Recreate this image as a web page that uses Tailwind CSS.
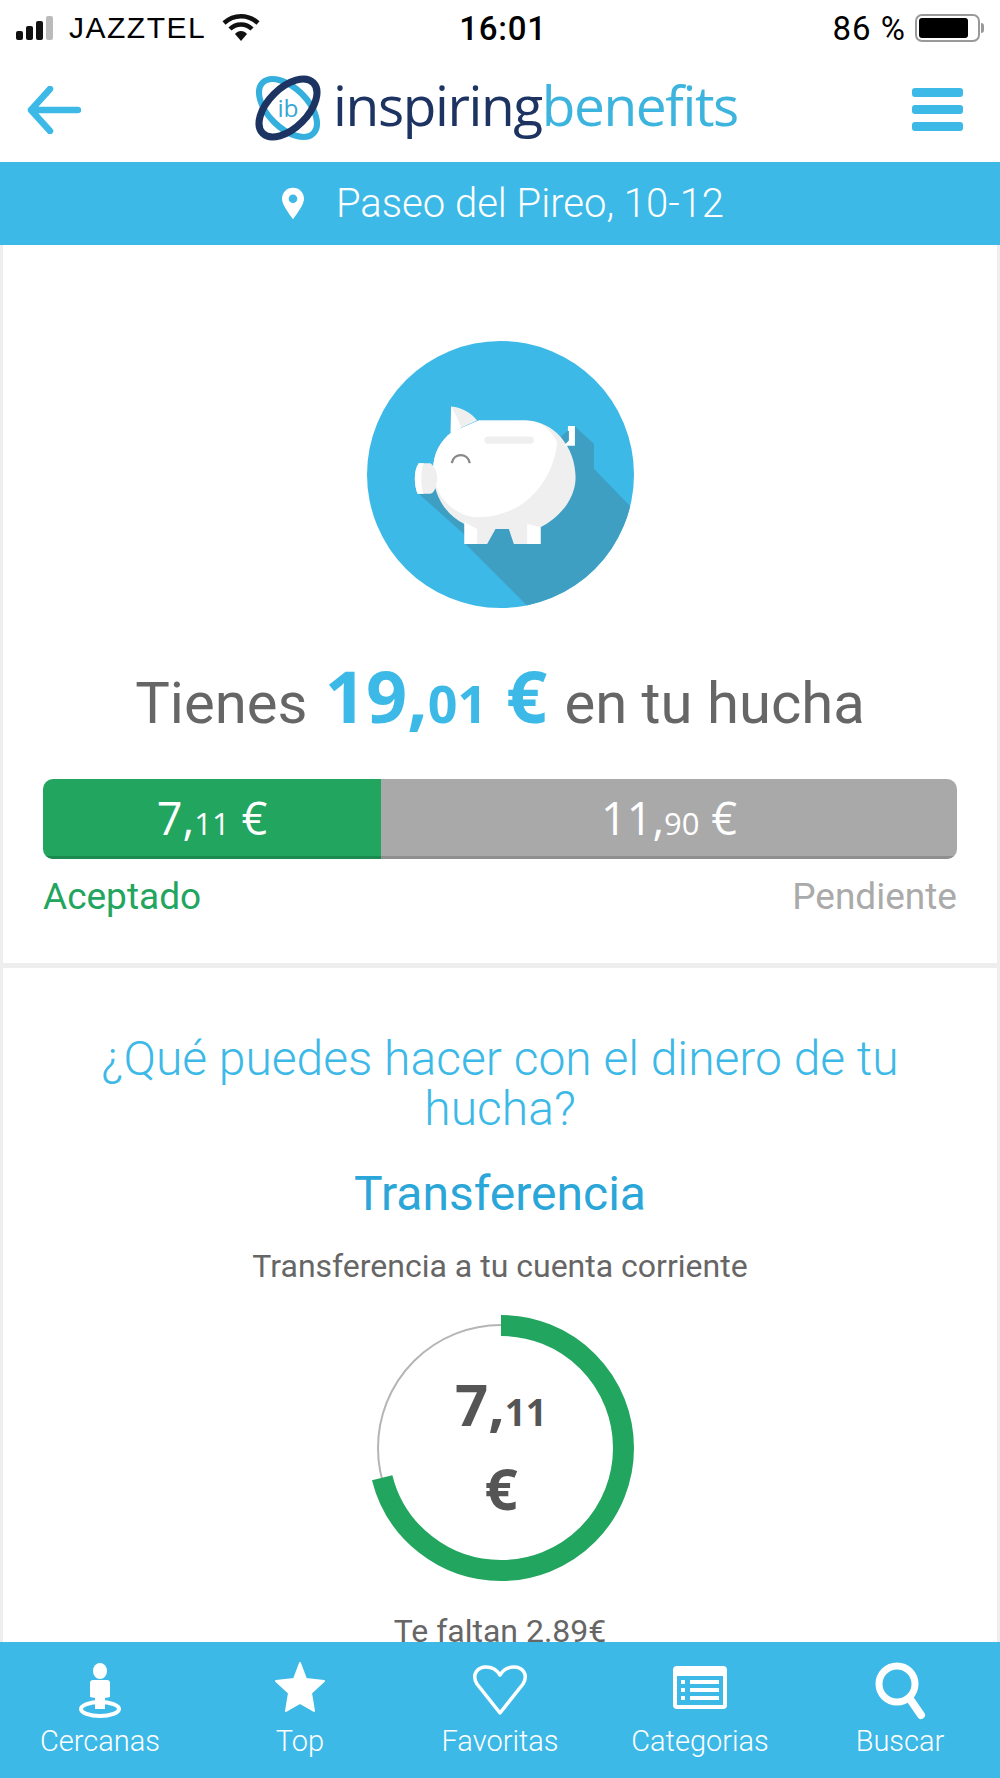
<!DOCTYPE html>
<html lang="es">
<head>
  <meta charset="UTF-8">
  <meta name="viewport" content="width=device-width, initial-scale=1.0">
  <title>Inspiring Benefits - Hucha</title>
  <script src="https://cdn.jsdelivr.net/npm/@tailwindcss/browser@4"></script>
</head>
<body class="bg-white font-['Roboto',sans-serif] text-[#666]">
<div class="relative flex h-[1778px] w-[1000px] flex-col overflow-hidden bg-white">

  <!-- Status bar -->
  <div class="flex h-[50px] shrink-0 items-center justify-between pl-[16px] pr-[16px] pt-[6px] font-['Liberation_Sans',sans-serif] text-black">
    <div class="flex w-[300px] items-center">
      <svg width="38" height="26" viewBox="0 0 38 26">
        <rect x="0" y="16" width="7" height="9" rx="2" fill="#111"/>
        <rect x="10" y="11" width="7" height="14" rx="2" fill="#111"/>
        <rect x="20" y="6" width="7" height="19" rx="2" fill="#111"/>
        <rect x="30" y="1" width="7" height="24" rx="2" fill="#bbb"/>
      </svg>
      <span class="ml-[15px] text-[30px] leading-none tracking-[1.5px]">JAZZTEL</span>
      <svg class="ml-[16px]" width="38" height="28" viewBox="0 0 38 28">
        <path d="M2 9C12 0 26 0 36 9M8 15C14 9 24 9 30 15" fill="none" stroke="#111" stroke-width="4.5"/>
        <path d="M13 20C16 16 22 16 25 20L19 27Z" fill="#111"/>
      </svg>
    </div>
    <div class="ml-[6px] font-['Roboto',sans-serif] text-[33px] font-medium leading-none tracking-[0.8px]">16:01</div>
    <div class="flex w-[300px] items-center justify-end">
      <span class="font-['Roboto',sans-serif] text-[33px] leading-none tracking-[1px]">86 %</span>
      <div class="ml-[9px] flex h-[28px] w-[65px] items-center rounded-[7px] border-2 border-[#999] p-[2px]">
        <div class="h-full w-[86%] rounded-[3px] bg-black"></div>
      </div>
      <div class="ml-[1px] h-[10px] w-[3px] rounded-r-full bg-[#999]"></div>
    </div>
  </div>

  <!-- Header -->
  <header class="relative flex h-[112px] shrink-0 items-center justify-between pl-[27px] pr-[37px]">
    <svg class="mt-[7px]" width="54" height="48" viewBox="0 0 54 48">
      <path d="M51 24H4M23 3L4 24L23 45" fill="none" stroke="#3cb9e7" stroke-width="6.500" stroke-linecap="round" stroke-linejoin="round"/>
    </svg>
    <div class="mt-[4px] flex items-center">
      <svg width="66" height="66" viewBox="0 0 70 70">
        <ellipse cx="35" cy="35" rx="38" ry="21" transform="rotate(45 35 35)" fill="none" stroke="#35b0de" stroke-width="6.500"/>
        <ellipse cx="35" cy="35" rx="38" ry="21" transform="rotate(-45 35 35)" fill="none" stroke="#1d3463" stroke-width="7.500"/>
        <text x="35" y="45" text-anchor="middle" font-family="Open Sans" font-size="26" fill="#35a6d4">ib</text>
      </svg>
      <div class="ml-[12px] pb-[8px] font-['Open_Sans',sans-serif] text-[55px] font-normal leading-none tracking-[-1.4px]">
        <span class="text-[#1d3463]">inspiring</span><span class="text-[#3cb4de]">benefits</span>
      </div>
    </div>
    <div class="mt-[7px] flex w-[51px] flex-col gap-[8px]">
      <div class="h-[9px] rounded-[3px] bg-[#3cb9e7]"></div>
      <div class="h-[9px] rounded-[3px] bg-[#3cb9e7]"></div>
      <div class="h-[9px] rounded-[3px] bg-[#3cb9e7]"></div>
    </div>
  </header>

  <!-- Location bar -->
  <div class="flex h-[83px] shrink-0 items-center justify-center bg-[#3cb9e7] pl-[6px] text-white">
    <svg class="mr-[32px]" width="22" height="33" viewBox="0 0 23 33">
      <path fill-rule="evenodd" d="M11.500 0C5 0 0 5 0 11.500C0 18 8 28 11.500 33C15 28 23 18 23 11.500C23 5 18 0 11.500 0ZM11.500 7A4.500 4.500 0 1 1 11.500 16A4.500 4.500 0 1 1 11.500 7Z" fill="#fff"/>
    </svg>
    <span class="text-[40px] font-light leading-none">Paseo del Pireo, 10-12</span>
  </div>

  <!-- Hucha card -->
  <section class="flex h-[718px] shrink-0 flex-col items-center border-x-[3px] border-[#eee] px-[40px] pt-[96px]">
    <svg width="267" height="267" viewBox="80 62 800 800">
      <defs><clipPath id="disc"><circle cx="480" cy="462" r="400"/></clipPath></defs>
      <circle cx="480" cy="462" r="400" fill="#3cb9e7"/>
      <path clip-path="url(#disc)" d="M235 520L370 640L375 670L620 915L920 610L760 445L760 370L700 315L600 400Z" fill="#3f9fc3"/>
      <path d="M415 300L555 300C640 300 705 380 705 470C705 540 650 595 600 620L600 670L520 670L505 625L465 625L440 670L372 670L372 610C320 585 278 530 278 450C278 400 300 360 335 335Z" fill="#efefef"/>
      <path d="M278 450C278 400 300 360 335 335L415 300L555 300C600 300 630 325 650 365C640 470 560 590 410 590C350 590 278 530 278 450Z" fill="#fff"/>
      <path d="M372 605L410 625L410 670L372 670ZM560 610L600 620L600 670L560 670Z" fill="#fff"/>
      <path d="M330 338L332 258C365 260 395 280 410 300L362 322Z" fill="#efefef"/>
      <path d="M332 258C345 280 355 300 362 322L332 338Z" fill="#fff"/>
      <path d="M235 428L270 428C285 440 292 460 290 480C288 500 280 520 268 520L232 520C222 500 218 450 235 428Z" fill="#efefef"/>
      <path d="M235 428L250 428C240 450 240 500 250 520L232 520C222 500 218 450 235 428Z" fill="#fff"/>
      <rect x="432" y="348" width="148" height="22" rx="11" fill="#efefef"/>
      <path d="M334 428C340 396 382 396 388 428" fill="none" stroke="#888" stroke-width="7"/>
      <path d="M682 317H703V376H670L685 360V332H682Z" fill="#fff"/>
    </svg>

    <h1 class="mt-[50px] h-[90px] whitespace-nowrap text-center text-[58px] leading-[90px] text-[#666]">
      Tienes <span class="mx-[3px] font-['Open_Sans',sans-serif] text-[72px] font-bold leading-none text-[#3cb9e7]">19,<span class="text-[52px]">01</span> €</span> en tu hucha
    </h1>

    <div class="mt-[31px] flex h-[80px] w-full overflow-hidden rounded-[10px] font-['Open_Sans',sans-serif] text-white">
      <div class="flex w-[338px] items-center justify-center border-b-[3px] border-[#1a8a4e] bg-[#22a55f] text-[45px]"><span>7,<span class="text-[31px]">11</span> €</span></div>
      <div class="flex flex-1 items-center justify-center border-b-[3px] border-[#8f8f8f] bg-[#a9a9a9] text-[45px]"><span>11,<span class="text-[31px]">90</span> €</span></div>
    </div>

    <div class="mt-[18px] flex w-full justify-between text-[37px] leading-[40px]">
      <span class="text-[#22a55f]">Aceptado</span>
      <span class="text-[#aaa]">Pendiente</span>
    </div>
  </section>

  <div class="h-[5px] shrink-0 bg-[#eee]"></div>

  <!-- Transferencia card -->
  <section class="flex flex-1 flex-col items-center border-x-[3px] border-[#eee] px-[40px] pt-[66px] text-center">
    <h2 class="text-[48px] font-light leading-[50px] text-[#3cb9e7]">¿Qué puedes hacer con el dinero de tu hucha?</h2>
    <h3 class="mt-[32px] text-[48px] leading-[56px] text-[#2ba6d8]">Transferencia</h3>
    <p class="mt-[26px] text-[32px] leading-[36px]">Transferencia a tu cuenta corriente</p>

    <div class="relative ml-[2px] mt-[31px] h-[266px] w-[266px] shrink-0">
      <svg class="absolute inset-0" width="266" height="266" viewBox="0 0 266 266">
        <circle cx="133" cy="133" r="123" fill="none" stroke="#b5b5b5" stroke-width="2"/>
        <circle cx="133" cy="133" r="122.500" fill="none" stroke="#22a55f" stroke-width="21" stroke-dasharray="547 770" transform="rotate(-90 133 133)"/>
      </svg>
      <div class="absolute inset-0 flex flex-col items-center justify-center pb-[5px] font-['Open_Sans',sans-serif] text-[58px] font-bold leading-[81px] text-[#555]">
        <div>7,<span class="text-[37px]">11</span></div>
        <div class="-mt-[5px]">€</div>
      </div>
    </div>

    <p class="mt-[32px] text-[32px] leading-[36px]">Te faltan 2.89€</p>
  </section>

  <!-- Bottom nav -->
  <nav class="absolute inset-x-0 bottom-0 grid h-[136px] grid-cols-5 bg-[#3cb9e7] text-white">
    <a class="flex flex-col items-center pt-[18px]">
      <svg width="60" height="60" viewBox="0 0 60 60">
        <ellipse cx="30" cy="11" rx="7" ry="8" fill="#fff"/>
        <path d="M23 20H37Q40 20 40 23V37L35 38V49H25V38L20 37V23Q20 20 23 20Z" fill="#fff"/>
        <ellipse cx="30" cy="49" rx="19" ry="7" fill="none" stroke="#fff" stroke-width="4"/>
      </svg>
      <span class="mt-[5px] text-[29px] font-light leading-[32px]">Cercanas</span>
    </a>
    <a class="flex flex-col items-center pt-[18px]">
      <svg width="60" height="60" viewBox="0 0 60 60">
        <path d="M30 3L36 19L54 21L41 33L44 51L30 43L16 51L19 33L6 21L24 19Z" fill="#fff" stroke="#fff" stroke-width="2" stroke-linejoin="round"/>
      </svg>
      <span class="mt-[5px] text-[29px] font-light leading-[32px]">Top</span>
    </a>
    <a class="flex flex-col items-center pt-[18px]">
      <svg width="60" height="60" viewBox="0 0 60 60">
        <path d="M30 53L7 24C1 14 8 7 16 7C22 7 27 10 30 15C33 10 38 7 44 7C52 7 59 14 53 24Z" fill="none" stroke="#fff" stroke-width="3.500" stroke-linejoin="round"/>
      </svg>
      <span class="mt-[5px] text-[29px] font-light leading-[32px]">Favoritas</span>
    </a>
    <a class="flex flex-col items-center pt-[18px]">
      <svg width="60" height="60" viewBox="0 0 60 60">
        <rect x="3" y="6" width="54" height="43" rx="4" fill="#fff"/>
        <rect x="7" y="16" width="46" height="29" fill="#3cb9e7"/>
        <path d="M11 22H15M20 22H49M11 30H15M20 30H49M11 38H15M20 38H49" stroke="#fff" stroke-width="4"/>
      </svg>
      <span class="mt-[5px] text-[29px] font-light leading-[32px]">Categorias</span>
    </a>
    <a class="flex flex-col items-center pt-[18px]">
      <svg width="60" height="60" viewBox="0 0 60 60">
        <circle cx="27" cy="24" r="18" fill="none" stroke="#fff" stroke-width="7"/>
        <path d="M40 39L51 55" stroke="#fff" stroke-width="8" stroke-linecap="round"/>
      </svg>
      <span class="mt-[5px] text-[29px] font-light leading-[32px]">Buscar</span>
    </a>
  </nav>
</div>
</body>
</html>
